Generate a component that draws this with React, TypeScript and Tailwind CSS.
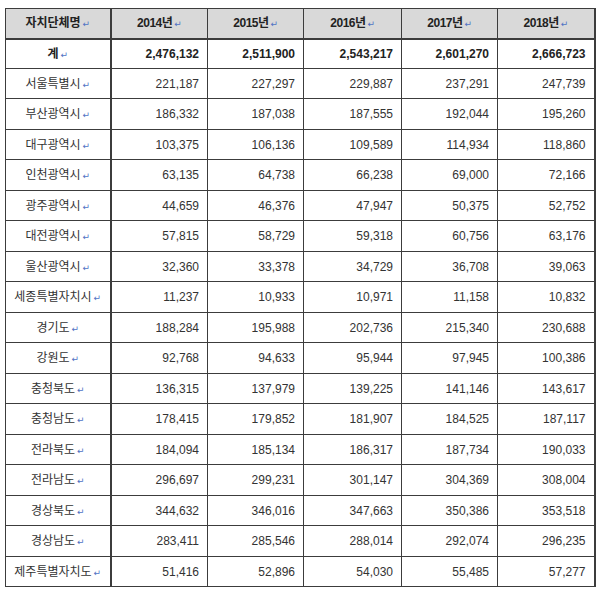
const years = ['2014년', '2015년', '2016년', '2017년', '2018년']

const total = ['2,476,132', '2,511,900', '2,543,217', '2,601,270', '2,666,723']

const rows: [string, string[]][] = [
  ['서울특별시', ['221,187', '227,297', '229,887', '237,291', '247,739']],
  ['부산광역시', ['186,332', '187,038', '187,555', '192,044', '195,260']],
  ['대구광역시', ['103,375', '106,136', '109,589', '114,934', '118,860']],
  ['인천광역시', ['63,135', '64,738', '66,238', '69,000', '72,166']],
  ['광주광역시', ['44,659', '46,376', '47,947', '50,375', '52,752']],
  ['대전광역시', ['57,815', '58,729', '59,318', '60,756', '63,176']],
  ['울산광역시', ['32,360', '33,378', '34,729', '36,708', '39,063']],
  ['세종특별자치시', ['11,237', '10,933', '10,971', '11,158', '10,832']],
  ['경기도', ['188,284', '195,988', '202,736', '215,340', '230,688']],
  ['강원도', ['92,768', '94,633', '95,944', '97,945', '100,386']],
  ['충청북도', ['136,315', '137,979', '139,225', '141,146', '143,617']],
  ['충청남도', ['178,415', '179,852', '181,907', '184,525', '187,117']],
  ['전라북도', ['184,094', '185,134', '186,317', '187,734', '190,033']],
  ['전라남도', ['296,697', '299,231', '301,147', '304,369', '308,004']],
  ['경상북도', ['344,632', '346,016', '347,663', '350,386', '353,518']],
  ['경상남도', ['283,411', '285,546', '288,014', '292,074', '296,235']],
  ['제주특별자치도', ['51,416', '52,896', '54,030', '55,485', '57,277']],
]

// paragraph mark shown by the word processor
function Ret() {
  return <span className="ml-[2px] font-['DejaVu_Sans'] text-[9px] font-normal text-[#4f72c4]">↵</span>
}

export default function App() {
  return (
    <div className="h-[592px] w-[600px] bg-white pl-[5px] pt-[8px] font-['Liberation_Sans','Noto_Sans_CJK_KR',sans-serif] text-[12px] text-[#333]">
      <table className="w-[589px] table-fixed border-collapse border-r-2 border-[#3c3c3c]">
        <colgroup>
          <col className="w-[105px]" />
          <col className="w-[97px]" />
          <col className="w-[96px]" />
          <col className="w-[98px]" />
          <col className="w-[96px]" />
          <col className="w-[97px]" />
        </colgroup>
        <thead>
          <tr className="h-[30px] bg-[#d9d9d9]">
            <th className="border border-b-2 border-r-2 border-[#3c3c3c] text-center font-bold text-[#222]">
              자치단체명<Ret />
            </th>
            {years.map((y) => (
              <th key={y} className="border border-b-2 border-[#3c3c3c] text-center font-bold tracking-[-0.5px] text-[#222]">
                {y}<Ret />
              </th>
            ))}
          </tr>
        </thead>
        <tbody>
          <tr className="h-[30px]">
            <td className="border border-r-2 border-[#3c3c3c] text-center font-bold text-[#222]">
              계<Ret />
            </td>
            {total.map((v) => (
              <td key={v} className="border border-[#3c3c3c] pr-[8px] text-right font-bold text-[#222]">
                {v}
              </td>
            ))}
          </tr>
          {rows.map(([name, vals], i) => (
            <tr key={name} className={i % 2 === 0 ? 'h-[30px]' : 'h-[31px]'}>
              <td className="border border-r-2 border-[#3c3c3c] text-center whitespace-nowrap">
                {name}<Ret />
              </td>
              {vals.map((v, j) => (
                <td key={j} className="border border-[#3c3c3c] pr-[8px] text-right">
                  {v}
                </td>
              ))}
            </tr>
          ))}
        </tbody>
      </table>
    </div>
  )
}
